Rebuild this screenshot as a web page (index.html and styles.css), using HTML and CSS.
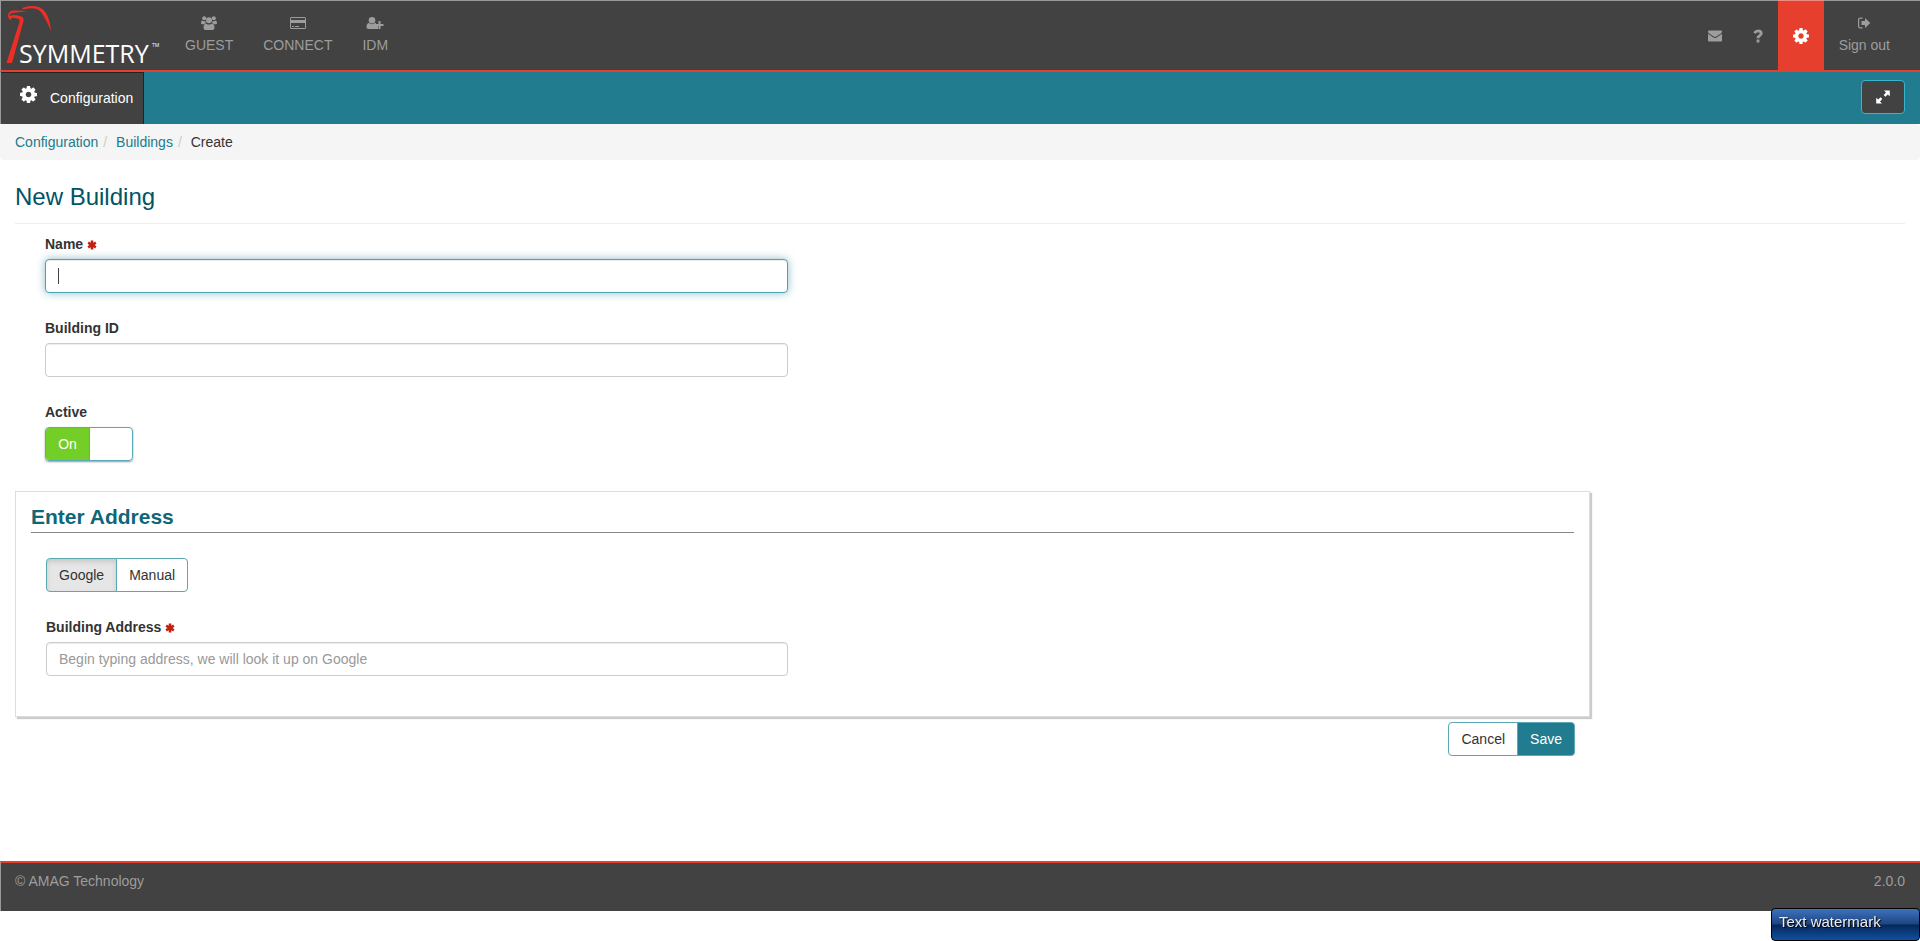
FILE: index.html
```
<!DOCTYPE html>
<html lang="en">
  <head>
    <meta charset="utf-8" />
    <title>Symmetry - New Building</title>
    <link rel="stylesheet" href="styles.css">
  </head>

<body>

  <!-- shared icons -->
  <svg class="sprite" aria-hidden="true">
    <symbol id="cog" viewBox="128 128 1536 1536">
      <path d="M1152 896q0-106-75-181t-181-75-181 75-75 181 75 181 181 75 181-75 75-181zm512-109v222q0 12-8 23t-20 13l-185 28q-19 54-39 91 35 50 107 138 10 12 10 25t-9 23q-27 37-99 108t-94 71q-12 0-26-9l-138-108q-44 23-91 38-16 136-29 186-7 28-36 28h-222q-14 0-24.500-8.500t-11.500-21.500l-28-184q-49-16-90-37l-141 107q-10 9-25 9-14 0-25-11-126-114-165-168-7-10-7-23 0-12 8-23 15-21 51-66.500t54-70.500q-27-50-41-99l-183-27q-13-2-21-12.500t-8-23.500v-222q0-12 8-23t19-13l186-28q14-46 39-92-40-57-107-138-10-12-10-24 0-10 9-23 26-36 98.500-107.500t94.500-71.500q13 0 26 10l138 107q44-23 91-38 16-136 29-186 7-28 36-28h222q14 0 24.500 8.500t11.500 21.500l28 184q49 16 90 37l142-107q9-9 24-9 13 0 25 10 129 119 165 170 7 8 7 22 0 12-8 23-15 21-51 66.500t-54 70.500q26 50 41 98l183 28q13 2 21 12.500t8 23.500z"/>
    </symbol>
    <symbol id="asterisk" viewBox="0 0 10 10">
      <path d="M3.700 0.500h2.600v2.200l1.900-1.100 1.300 2.200L7.600 5l1.900 1.200-1.300 2.200-1.900-1.100v2.200H3.700V7.300L1.800 8.400.5 6.200 2.400 5 .5 3.800l1.300-2.200 1.900 1.100z"/>
    </symbol>
  </svg>

  <header class="topbar">
    <a class="logo" href="#" aria-label="Symmetry">
      <svg width="170" height="68" viewBox="1 1 170 68">
        <g fill="#ee2e24">
          <path d="M6.500 63L19.500 22Q20.500 19 17.500 18.500Q14 17.500 12 17.800Q11.200 18.500 11 20Q8.500 19.500 8 16.500Q8 11 13 10.600Q20 10.300 27 11.300Q20 12 14 12.800Q10 13 9.800 15.500Q10 16.500 11 15.500Q14 14.500 20 16Q24.500 17 23.500 21L12 63Z"/>
          <path d="M22 8.500Q24 6.500 32 6Q41 5.500 46 13Q50 20 51 31Q46 19 41 12Q38 8.500 32 8.300Q28 8.300 23 9.500Z"/>
        </g>
        <text class="logo-text" x="19" y="63">SYMMETRY</text>
        <text class="logo-tm" x="152" y="47">TM</text>
      </svg>
    </a>

    <nav class="nav">
      <a class="nav-item" href="#">
        <svg class="icon" width="16" height="14" viewBox="0 0 16 14">
          <circle cx="3.200" cy="2.300" r="2"/><circle cx="12.800" cy="2.300" r="2"/><circle cx="8" cy="4.300" r="3"/>
          <path d="M0 7.500Q0 4.600 1.200 4.500Q3 5.600 4.300 4.900Q4.500 6.300 5.200 7.200Q3.800 7.200 3 8.300H1.200Q0 8.300 0 7.500ZM16 7.500Q16 4.600 14.800 4.500Q13 5.600 11.700 4.900Q11.500 6.300 10.800 7.200Q12.200 7.200 13 8.300H14.800Q16 8.300 16 7.500ZM4.700 14Q2.500 14 2.500 11.800Q2.500 7.800 5.200 7.700Q8 9.500 10.800 7.700Q13.500 7.800 13.500 11.800Q13.500 14 11.300 14Z"/>
        </svg>
        <span>GUEST</span>
      </a>
      <a class="nav-item" href="#">
        <svg class="icon" width="16" height="14" viewBox="0 0 16 14">
          <path fill-rule="evenodd" d="M1.500 1H14.500Q16 1 16 2.500V11.500Q16 13 14.500 13H1.500Q0 13 0 11.500V2.500Q0 1 1.500 1ZM1 2.300V4H15V2.300Q15 2 14.600 2H1.400Q1 2 1 2.300ZM1 7V12H15V7ZM2 10H4V11H2ZM5 10H9V11H5Z"/>
        </svg>
        <span>CONNECT</span>
      </a>
      <a class="nav-item" href="#">
        <svg class="icon" width="18" height="14" viewBox="0 0 18 14">
          <circle cx="6" cy="4.300" r="3.300"/>
          <path d="M2.300 13Q.500 13 .500 11Q.500 7.300 3 7Q6 9.300 9 7L10 7.300V10H12V13ZM12.500 5H14.500V8H17.500V10H14.500V13H12.500V10H10V8H12.500Z"/>
        </svg>
        <span>IDM</span>
      </a>
    </nav>

    <nav class="nav nav-right">
      <a class="nav-item" href="#" aria-label="Messages">
        <svg class="icon" width="15" height="14" viewBox="0 0 15 14">
          <path d="M0 3V2.500Q0 1.500 1 1.500H13Q14 1.500 14 2.500V3Q13.500 4 12.500 4.700L8.300 7.600Q7 8.400 5.700 7.600L1.500 4.700Q.500 4 0 3ZM0 4.800L5 8.300Q7 9.600 9 8.300L14 4.800V11.500Q14 12.500 13 12.500H1Q0 12.500 0 11.500Z"/>
        </svg>
      </a>
      <a class="nav-item" href="#" aria-label="Help">
        <svg class="icon" width="10" height="14" viewBox="0 0 10 14">
          <path d="M3.600 10.600H6.400V13.400H3.600ZM3.600 9.300Q3.300 6.900 5.200 6Q6.900 5.200 6.700 4.300Q6.400 3.200 5 3.200Q3.600 3.200 2.500 4.900L.300 3.300Q2 .400 5.200.400Q9.500.600 9.700 4.200Q9.700 6.300 7.700 7.400Q6.400 8.200 6.400 9.300Z"/>
        </svg>
      </a>
      <a class="nav-item active" href="#" aria-label="Settings">
        <svg class="icon" width="16" height="16"><use href="#cog"/></svg>
      </a>
      <a class="nav-item" href="#">
        <svg class="icon" width="14" height="14" viewBox="0 0 14 14">
          <path d="M5.500 2.200H3.200Q1.600 2.200 1.600 3.800V10.200Q1.600 11.800 3.200 11.800H5.500" fill="none" stroke="currentColor" stroke-width="1.200"/>
          <path d="M4.500 5H8V2L13.300 7L8 12V9H4.500Z"/>
        </svg>
        <span>Sign out</span>
      </a>
    </nav>
  </header>

  <div class="subbar">
    <a class="tab" href="#">
      <svg class="icon" width="17" height="17"><use href="#cog"/></svg>
      <span>Configuration</span>
    </a>
    <button class="btn btn-expand" type="button" aria-label="Full width">
      <svg class="icon" width="18" height="14" viewBox="0 0 18 14">
        <path d="M10 .5H15.800V6.200L13.800 4.400L11.400 6.700L9.700 5L12 2.500ZM8 13.500H2.200V7.800L4.200 9.600L6.600 7.300L8.300 9L6 11.500Z"/>
      </svg>
    </button>
  </div>

  <ol class="breadcrumb">
    <li><a href="#">Configuration</a></li>
    <li><a href="#">Buildings</a></li>
    <li>Create</li>
  </ol>

  <main class="content">
    <h1 class="page-title">New Building</h1>

    <form class="form" onsubmit="return false">
      <div class="fields">
        <div class="form-group">
          <label for="name">Name <svg class="required" width="10" height="10"><use href="#asterisk"/></svg></label>
          <input class="form-control" type="text" id="name" autocomplete="off" autofocus>
        </div>
        <div class="form-group">
          <label for="buildingId">Building ID</label>
          <input class="form-control" type="text" id="buildingId">
        </div>
        <div class="form-group">
          <label for="active">Active</label>
          <div class="switch">
            <input type="checkbox" id="active" checked>
            <span class="switch-on">On</span>
          </div>
        </div>
      </div>

      <section class="panel">
        <h2 class="panel-title">Enter Address</h2>
        <div class="panel-fields">
          <div class="btn-group form-group">
            <button class="btn pressed" type="button">Google</button>
            <button class="btn" type="button">Manual</button>
          </div>
          <div class="form-group">
            <label for="address">Building Address <svg class="required" width="10" height="10"><use href="#asterisk"/></svg></label>
            <input class="form-control" type="text" id="address" placeholder="Begin typing address, we will look it up on Google">
          </div>
        </div>
      </section>

      <div class="actions btn-group">
        <button class="btn" type="button">Cancel</button>
        <button class="btn btn-primary" type="submit">Save</button>
      </div>
    </form>
  </main>

  <footer class="footer">
    <span>© AMAG Technology</span>
    <span>2.0.0</span>
  </footer>

  <div class="watermark">Text watermark</div>

</body>
</html>
```
FILE: styles.css
```
* { box-sizing: border-box; }
body {
  margin: 0;
  background-color: #fff;
  color: #333;
  font-family: "Liberation Sans", Arial, sans-serif;
  font-size: 14px;
  line-height: 20px;
}
a { color: #207c8e; text-decoration: none; }
.sprite { display: none; }
.icon { display: block; fill: currentColor; }

/* top bar */
.topbar {
  display: flex;
  background-color: #424242;
  border-top: 1px solid #999;
  border-left: 1px solid #999;
  border-bottom: 2px solid #e73f2d;
}
.logo { width: 169px; }
.logo svg { display: block; }
.logo-text {
  fill: #fff;
  font-family: "Open Sans", sans-serif;
  font-size: 25px;
}
.logo-tm {
  fill: #fff;
  font-family: "Open Sans", sans-serif;
  font-size: 5px;
}
.nav { display: flex; }
.nav-right { margin-left: auto; padding-right: 15px; }
.nav-item {
  display: flex;
  flex-direction: column;
  align-items: center;
  justify-content: center;
  min-height: 69px;
  padding: 0 15px;
  color: #9d9d9d;
}
.nav-item .icon + span { padding-top: 5px; }
.nav-item.active {
  background-color: #e73f2d;
  box-shadow: 0 -1px 0 #ee8c82;
  color: #fff;
}

/* section bar */
.subbar {
  display: flex;
  align-items: flex-start;
  justify-content: space-between;
  padding-right: 15px;
  background-color: #207c8e;
  border-left: 1px solid #999;
}
.tab {
  display: flex;
  gap: 13px;
  height: 52px;
  padding: 15px 10px 0 19px;
  background-color: #424242;
  border-top: 1px solid #222;
  border-right: 1px solid #222;
  color: #fff;
}
.tab .icon { margin-top: -2px; }

.breadcrumb {
  display: flex;
  margin: 0;
  padding: 8px 15px;
  background-color: #f5f5f5;
  border-radius: 4px;
  list-style: none;
}
.breadcrumb li + li::before {
  content: "/\00a0";
  padding: 0 5px;
  color: #ccc;
}

/* form */
.content { padding: 24px 15px 105px; }
.page-title {
  margin: 0 0 10px;
  padding-bottom: 13px;
  border-bottom: 1px solid #eee;
  color: #005465;
  font-size: 24px;
  font-weight: normal;
  line-height: 26px;
}
.form { width: 83.3333%; }
.fields { width: 50%; padding: 0 14px 5px 30px; }
.form-group { margin-bottom: 25px; }
.form-group label {
  display: block;
  margin-bottom: 5px;
  font-weight: bold;
}
.required { fill: #c1200f; vertical-align: -1px; }
.form-control {
  display: block;
  width: 100%;
  height: 34px;
  padding: 6px 12px;
  border: 1px solid #ccc;
  border-radius: 4px;
  box-shadow: inset 0 1px 1px rgba(0,0,0,.075);
  color: #555;
  font: inherit;
}
.form-control::placeholder { color: #999; }
.form-control:focus {
  border-color: #4ba3b3;
  outline: 0;
  box-shadow: inset 0 1px 1px rgba(0,0,0,.075), 0 0 8px rgba(32,124,142,.5);
}
.form-control:focus:not([placeholder]) {
  background: linear-gradient(#444, #444) 12px center / 1px 16px no-repeat #fff;
  caret-color: transparent;
}

.switch {
  position: relative;
  width: 88px;
  height: 34px;
  border: 1px solid #5ba8b6;
  border-radius: 4px;
  box-shadow: 0 1px 2px rgba(0,0,0,.4);
  overflow: hidden;
}
.switch input {
  position: absolute;
  inset: 0;
  width: 100%;
  height: 100%;
  margin: 0;
  opacity: 0;
  cursor: pointer;
}
.switch-on {
  display: block;
  width: 44px;
  padding: 6px 0;
  background-color: #73cf27;
  border-right: 1px solid #5ba8b6;
  color: #fff;
  text-align: center;
}

.panel {
  padding: 10px 15px 15px;
  border: 1px solid #ddd;
  box-shadow: 2px 2px 1px #ccc;
}
.panel-title {
  margin: 0 0 25px;
  border-bottom: 1px solid #888;
  color: #0e6677;
  font-size: 21px;
  line-height: 30px;
}
.panel-fields { width: 50%; padding: 0 14px 0 15px; }

.btn {
  height: 34px;
  padding: 6px 12px;
  background-color: #fff;
  border: 1px solid #5ba8b6;
  border-radius: 4px;
  color: #333;
  font: inherit;
  cursor: pointer;
}
.btn-group { display: flex; }
.btn-group .btn:first-child { border-radius: 4px 0 0 4px; }
.btn-group .btn:last-child { margin-left: -1px; border-radius: 0 4px 4px 0; }
.btn.pressed {
  background-color: #e6e6e6;
  box-shadow: inset 0 3px 5px rgba(0,0,0,.125);
}
.btn-primary { background-color: #207c8e; color: #fff; }
.btn-expand {
  margin-top: 8px;
  background-color: #424242;
  border-color: #37b5cf;
  color: #fff;
}
.actions {
  justify-content: flex-end;
  padding: 5px 15px 0;
}

/* footer */
.footer {
  display: flex;
  justify-content: space-between;
  padding: 8px 15px 20px 14px;
  background-color: #424242;
  border-top: 2px solid #e73f2d;
  border-left: 1px solid #999;
  color: #9d9d9d;
}

.watermark {
  position: fixed;
  right: 0;
  bottom: 0;
  width: 149px;
  height: 33px;
  padding: 3px 7px;
  background: linear-gradient(#3f72bd 0%, #1d4583 48%, #06285a 52%, #11509f 100%);
  border: 1px solid #000;
  border-radius: 4px;
  color: #eee;
  font-size: 15px;
  text-shadow: 1px 1px 1px #000;
}
```
